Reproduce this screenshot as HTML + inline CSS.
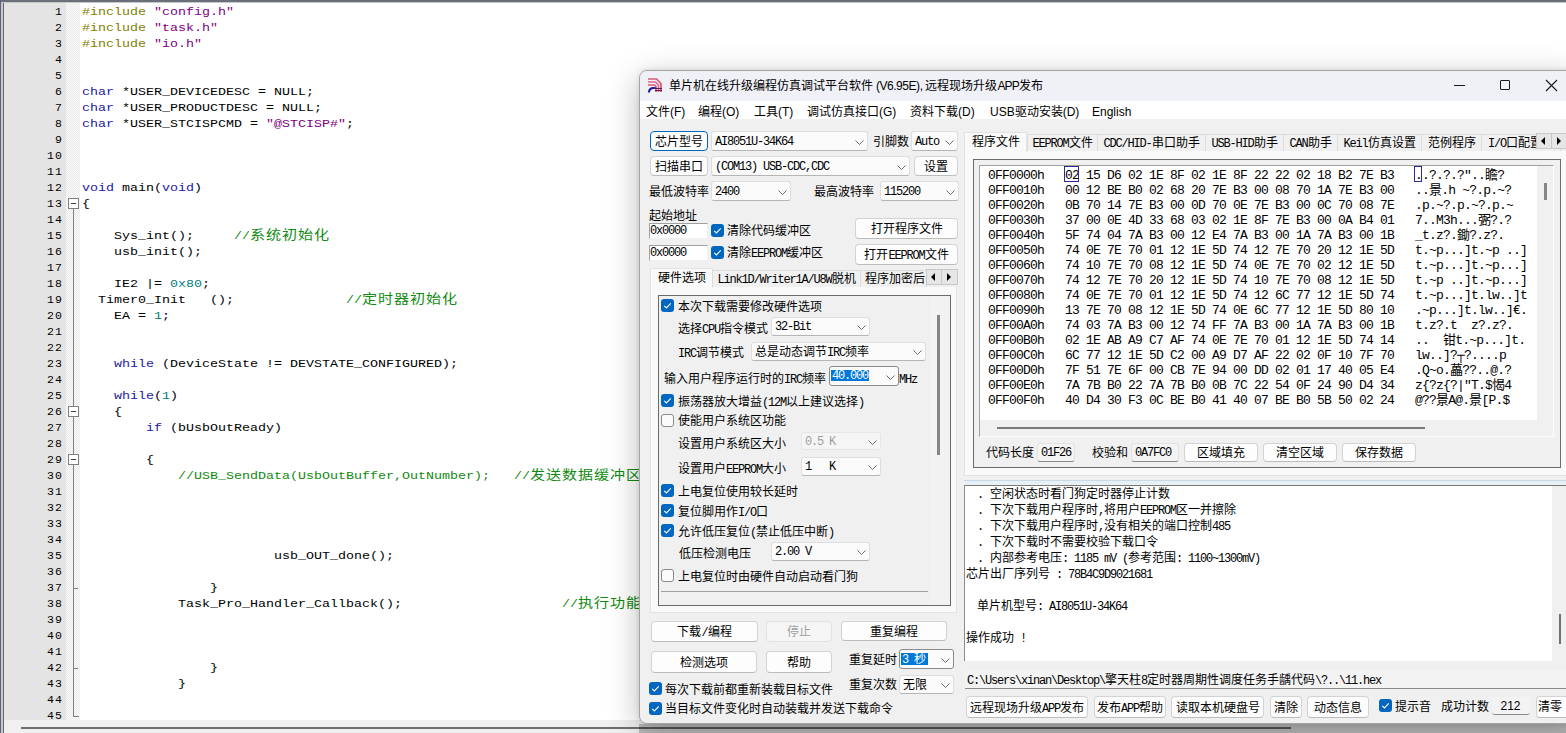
<!DOCTYPE html><html lang="zh-CN"><head><meta charset="utf-8"><style>
*{margin:0;padding:0;box-sizing:border-box}
html,body{width:1566px;height:733px;overflow:hidden;background:#fff}
body{position:relative;font-family:"Liberation Sans",sans-serif;font-size:12px;color:#000}
.a{position:absolute}
#ed{position:absolute;left:0;top:0;width:1566px;height:733px;background:#fff}
.ln{position:absolute;left:4px;width:59px;text-align:right;font-family:"Liberation Mono",monospace;font-size:11.5px;letter-spacing:1.1px;line-height:16px;color:#000;white-space:pre}
.cl{position:absolute;left:82px;font-family:"Liberation Mono",monospace;font-size:11.5px;letter-spacing:0;line-height:16px;color:#000;white-space:pre;transform-origin:0 0;transform:scaleX(1.15942)}
.cj{font-size:13px;letter-spacing:0.8px}
.kw{color:#1a1aa6}.pp{color:#808000}.st{color:#800080}.cm{color:#108a10}.nu{color:#008080}

#win{position:absolute;left:639px;top:70px;width:940px;height:654px;background:#f0f0f0;border:1px solid #a4a4a4;border-radius:8px;overflow:hidden;box-shadow:0 0 5px rgba(0,0,0,0.10),0 8px 32px rgba(0,0,0,0.27)}
.L{position:absolute;white-space:pre;font-size:12px;line-height:16px;height:16px;color:#000}
.ss{font-family:"Liberation Mono",monospace;font-size:12px;letter-spacing:-1.2px}
.btn{position:absolute;background:#fdfdfd;border:1px solid #d3d3d3;border-bottom-color:#bcbcbc;border-radius:4px;text-align:center;white-space:nowrap;font-size:12px;color:#000}
.cmb{position:absolute;background:#fbfbfb;border:1px solid #dedede;border-bottom-color:#b5b5b5;border-radius:3px;white-space:nowrap;font-size:12px;color:#000}
.chv{position:absolute;width:9px;height:5px}.chv svg{display:block}
.chk{position:absolute;width:13px;height:13px;border-radius:3px;background:#0067c0}
.unc{position:absolute;width:13px;height:13px;border-radius:3px;background:#fbfbfb;border:1px solid #8a8a8a}
.edt{position:absolute;background:#fff;border-top:1px solid #a0a0a0;border-left:1px solid #a0a0a0;border-right:1px solid #f0f0f0;border-bottom:1px solid #f0f0f0;white-space:nowrap}
.hex{position:absolute;left:988px;font-family:"Liberation Mono",monospace;font-size:13px;letter-spacing:-0.8px;line-height:15px;height:15px;white-space:pre;color:#000}
.tab{position:absolute;background:#f0f0f0;border:1px solid #d9d9d9;border-bottom:none;white-space:nowrap;font-size:12px;text-align:center;line-height:17px}
</style></head><body><div id="ed"><div class="a" style="left:0;top:0;width:1566px;height:2px;background:#6b6f7a"></div><div class="a" style="left:0;top:2px;width:1566px;height:1px;background:#c8c8c8"></div><div class="a" style="left:0;top:0;width:1px;height:733px;background:#5a6488"></div><div class="a" style="left:1px;top:2px;width:2px;height:731px;background:#c8c8c8"></div><div class="a" style="left:3px;top:3px;width:1px;height:730px;background:#6a6a6a"></div><div class="a" style="left:4px;top:3px;width:62px;height:717px;background:#e4e4e4"></div><div class="a" style="left:66px;top:3px;width:14px;height:717px;background-color:#f8f8f8;background-image:linear-gradient(45deg,#ececec 25%,transparent 25%,transparent 75%,#ececec 75%),linear-gradient(45deg,#ececec 25%,transparent 25%,transparent 75%,#ececec 75%);background-size:2px 2px;background-position:0 0,1px 1px"></div><div class="ln" style="top:4px">1</div><div class="ln" style="top:20px">2</div><div class="ln" style="top:36px">3</div><div class="ln" style="top:52px">4</div><div class="ln" style="top:68px">5</div><div class="ln" style="top:84px">6</div><div class="ln" style="top:100px">7</div><div class="ln" style="top:116px">8</div><div class="ln" style="top:132px">9</div><div class="ln" style="top:148px">10</div><div class="ln" style="top:164px">11</div><div class="ln" style="top:180px">12</div><div class="ln" style="top:196px">13</div><div class="ln" style="top:212px">14</div><div class="ln" style="top:228px">15</div><div class="ln" style="top:244px">16</div><div class="ln" style="top:260px">17</div><div class="ln" style="top:276px">18</div><div class="ln" style="top:292px">19</div><div class="ln" style="top:308px">20</div><div class="ln" style="top:324px">21</div><div class="ln" style="top:340px">22</div><div class="ln" style="top:356px">23</div><div class="ln" style="top:372px">24</div><div class="ln" style="top:388px">25</div><div class="ln" style="top:404px">26</div><div class="ln" style="top:420px">27</div><div class="ln" style="top:436px">28</div><div class="ln" style="top:452px">29</div><div class="ln" style="top:468px">30</div><div class="ln" style="top:484px">31</div><div class="ln" style="top:500px">32</div><div class="ln" style="top:516px">33</div><div class="ln" style="top:532px">34</div><div class="ln" style="top:548px">35</div><div class="ln" style="top:564px">36</div><div class="ln" style="top:580px">37</div><div class="ln" style="top:596px">38</div><div class="ln" style="top:612px">39</div><div class="ln" style="top:628px">40</div><div class="ln" style="top:644px">41</div><div class="ln" style="top:660px">42</div><div class="ln" style="top:676px">43</div><div class="ln" style="top:692px">44</div><div class="ln" style="top:708px">45</div><div class="cl" style="top:4px"><span class="pp">#include</span> <span class="st">"config.h"</span></div><div class="cl" style="top:20px"><span class="pp">#include</span> <span class="st">"task.h"</span></div><div class="cl" style="top:36px"><span class="pp">#include</span> <span class="st">"io.h"</span></div><div class="cl" style="top:84px"><span class="kw">char</span> *USER_DEVICEDESC = NULL;</div><div class="cl" style="top:100px"><span class="kw">char</span> *USER_PRODUCTDESC = NULL;</div><div class="cl" style="top:116px"><span class="kw">char</span> *USER_STCISPCMD = <span class="st">"@STCISP#"</span>;</div><div class="cl" style="top:180px"><span class="kw">void</span> main(<span class="kw">void</span>)</div><div class="cl" style="top:196px">{</div><div class="cl" style="top:228px">    Sys_int();     <span class="cm">//<span class="cj">系统初始化</span></span></div><div class="cl" style="top:244px">    usb_init();</div><div class="cl" style="top:276px">    IE2 |= <span class="nu">0x80</span>;</div><div class="cl" style="top:292px">  Timer0_Init   ();              <span class="cm">//<span class="cj">定时器初始化</span></span></div><div class="cl" style="top:308px">    EA = <span class="nu">1</span>;</div><div class="cl" style="top:356px">    <span class="kw">while</span> (DeviceState != DEVSTATE_CONFIGURED);</div><div class="cl" style="top:388px">    <span class="kw">while</span>(<span class="nu">1</span>)</div><div class="cl" style="top:404px">    {</div><div class="cl" style="top:420px">        <span class="kw">if</span> (bUsbOutReady)</div><div class="cl" style="top:452px">        {</div><div class="cl" style="top:468px">            <span class="cm">//USB_SendData(UsbOutBuffer,OutNumber);   //<span class="cj">发送数据缓冲区</span></span></div><div class="cl" style="top:548px">                        usb_OUT_done();</div><div class="cl" style="top:580px">                }</div><div class="cl" style="top:596px">            Task_Pro_Handler_Callback();                    <span class="cm">//<span class="cj">执行功能</span></span></div><div class="cl" style="top:660px">                }</div><div class="cl" style="top:676px">            }</div><div class="a" style="left:73px;top:209px;width:1px;height:507px;background:#808080"></div><div class="a" style="left:73px;top:716px;width:6px;height:1px;background:#808080"></div><div class="a" style="left:73px;top:588px;width:5px;height:1px;background:#808080"></div><div class="a" style="left:73px;top:668px;width:5px;height:1px;background:#808080"></div><div class="a" style="left:68px;top:198px;width:11px;height:11px;border:1px solid #808080;background:#fff"><div class="a" style="left:2px;top:4px;width:5px;height:1px;background:#404040"></div></div><div class="a" style="left:68px;top:406px;width:11px;height:11px;border:1px solid #808080;background:#fff"><div class="a" style="left:2px;top:4px;width:5px;height:1px;background:#404040"></div></div><div class="a" style="left:68px;top:454px;width:11px;height:11px;border:1px solid #808080;background:#fff"><div class="a" style="left:2px;top:4px;width:5px;height:1px;background:#404040"></div></div><div class="a" style="left:4px;top:720px;width:1562px;height:13px;background:#f0f0f0"></div><div class="a" style="left:21px;top:727px;width:1270px;height:2px;background:#6e6e6e"></div></div><div id="win"><div class="a" style="left:-1px;top:-1px;width:940px;height:31px;background:#f0f1f7"></div><div class="a" style="left:-1px;top:30px;width:940px;height:18px;background:#ffffff"></div><svg class="a" style="left:7px;top:6px" width="16" height="16" viewBox="0 0 16 16"><path d="M1 2 H9.5 L14 6.5 V15" fill="none" stroke="#d8587a" stroke-width="1.7"/><path d="M1 5 H8.5 L11.5 8 V15" fill="none" stroke="#e06a88" stroke-width="1.7"/><path d="M1 8 H7.5 L9 9.5 V15" fill="none" stroke="#d8587a" stroke-width="1.7"/><path d="M2 15.5 Q2 11 6.5 11 H8.5" fill="none" stroke="#1818a8" stroke-width="2"/><path d="M8 11.5 H15 M8 13.5 H15" stroke="#501040" stroke-width="0.9"/></svg><div class="L " style="left:29px;top:6.5px">单片机在线升级编程仿真调试平台软件<span style="letter-spacing:-0.45px"> (V6.95E), </span>远程现场升级<span style="letter-spacing:-0.9px">APP</span>发布</div><div class="a" style="left:814px;top:14px;width:11px;height:1px;background:#1a1a1a"></div><div class="a" style="left:860px;top:9px;width:10px;height:10px;border:1px solid #1a1a1a;border-radius:1px"></div><svg class="a" style="left:905px;top:8px" width="13" height="13" viewBox="0 0 13 13"><path d="M1 1 L12 12 M12 1 L1 12" stroke="#1a1a1a" stroke-width="1.1"/></svg><div class="L " style="left:6px;top:33px">文件(F)</div><div class="L " style="left:58px;top:33px">编程(O)</div><div class="L " style="left:114px;top:33px">工具(T)</div><div class="L " style="left:167px;top:33px">调试仿真接口(G)</div><div class="L " style="left:270px;top:33px">资料下载(D)</div><div class="L " style="left:350px;top:33px">USB驱动安装(D)</div><div class="L " style="left:452px;top:33px">English</div><div class="btn " style="left:10px;top:60px;width:58px;height:20px;line-height:20px;border:1px solid #0067c0;box-shadow:inset 0 0 0 0px #0067c0">芯片型号</div><div class="cmb" style="left:71px;top:60px;width:157px;height:20px"><div class="L ss" style="left:3px;top:2px">AI8051U-34K64</div><div class="chv" style="right:3px;top:8px"><svg width="9" height="5" viewBox="0 0 9 5"><path d="M0.5 0.5 L4.5 4.5 L8.5 0.5" fill="none" stroke="#5a5a5a" stroke-width="0.9"/></svg></div></div><div class="L " style="left:233px;top:63px">引脚数</div><div class="cmb" style="left:271px;top:60px;width:47px;height:20px"><div class="L ss" style="left:3px;top:2px">Auto</div><div class="chv" style="right:3px;top:8px"><svg width="9" height="5" viewBox="0 0 9 5"><path d="M0.5 0.5 L4.5 4.5 L8.5 0.5" fill="none" stroke="#5a5a5a" stroke-width="0.9"/></svg></div></div><div class="btn " style="left:10px;top:85px;width:58px;height:20px;line-height:20px">扫描串口</div><div class="cmb" style="left:71px;top:85px;width:199px;height:20px"><div class="L ss" style="left:3px;top:2px">(COM13) USB-CDC,CDC</div><div class="chv" style="right:3px;top:8px"><svg width="9" height="5" viewBox="0 0 9 5"><path d="M0.5 0.5 L4.5 4.5 L8.5 0.5" fill="none" stroke="#5a5a5a" stroke-width="0.9"/></svg></div></div><div class="btn " style="left:274px;top:85px;width:44px;height:20px;line-height:20px">设置</div><div class="L " style="left:9px;top:113px">最低波特率</div><div class="cmb" style="left:71px;top:110px;width:80px;height:20px"><div class="L ss" style="left:3px;top:2px">2400</div><div class="chv" style="right:3px;top:8px"><svg width="9" height="5" viewBox="0 0 9 5"><path d="M0.5 0.5 L4.5 4.5 L8.5 0.5" fill="none" stroke="#5a5a5a" stroke-width="0.9"/></svg></div></div><div class="L " style="left:174px;top:113px">最高波特率</div><div class="cmb" style="left:240px;top:110px;width:79px;height:20px"><div class="L ss" style="left:3px;top:2px">115200</div><div class="chv" style="right:3px;top:8px"><svg width="9" height="5" viewBox="0 0 9 5"><path d="M0.5 0.5 L4.5 4.5 L8.5 0.5" fill="none" stroke="#5a5a5a" stroke-width="0.9"/></svg></div></div><div class="L " style="left:9px;top:137px">起始地址</div><div class="edt" style="left:9px;top:152px;width:59px;height:16px"><div class="L ss" style="left:0;top:-1px">0x0000</div></div><div class="chk" style="left:71px;top:153px"><svg width="13" height="13" viewBox="0 0 13 13" style="position:absolute;left:0;top:0"><path d="M3.2 6.8 L5.4 9 L9.8 4.4" fill="none" stroke="#fff" stroke-width="1.1"/></svg></div><div class="L " style="left:87px;top:152px">清除代码缓冲区</div><div class="btn " style="left:215px;top:147px;width:103px;height:21px;line-height:21px">打开程序文件</div><div class="edt" style="left:9px;top:174px;width:59px;height:16px"><div class="L ss" style="left:0;top:-1px">0x0000</div></div><div class="chk" style="left:71px;top:175px"><svg width="13" height="13" viewBox="0 0 13 13" style="position:absolute;left:0;top:0"><path d="M3.2 6.8 L5.4 9 L9.8 4.4" fill="none" stroke="#fff" stroke-width="1.1"/></svg></div><div class="L " style="left:87px;top:174px">清除<span class="ss">EEPROM</span>缓冲区</div><div class="btn " style="left:215px;top:173px;width:103px;height:21px;line-height:21px">打开<span class="ss">EEPROM</span>文件</div><div class="a" style="left:10px;top:216px;width:307px;height:326px;background:#f9f9f9;border:1px solid #e3e3e3;border-top:none"></div><div class="tab" style="left:10px;top:197px;width:63px;height:20px;background:#f9f9f9;border-color:#e3e3e3;line-height:18px">硬件选项</div><div class="tab" style="left:72px;top:199px;width:149px;height:17px;border-color:#dcdcdc"><span class="ss">Link1D/Writer1A/U8W</span>脱机</div><div class="tab" style="left:220px;top:199px;width:67px;height:17px;border-color:#dcdcdc;text-align:left;padding-left:4px;overflow:hidden">程序加密后</div><div class="a" style="left:286px;top:198px;width:16px;height:16px;background:#e6e6e6;border:1px solid #c8c8c8"></div><div class="a" style="left:301px;top:198px;width:17px;height:16px;background:#e6e6e6;border:1px solid #c8c8c8"></div><svg class="a" style="left:291px;top:202px" width="5" height="8"><path d="M4 0 L0 4 L4 8Z" fill="#000"/></svg><svg class="a" style="left:307px;top:202px" width="5" height="8"><path d="M0 0 L4 4 L0 8Z" fill="#000"/></svg><div class="a" style="left:18px;top:224px;width:293px;height:311px;background:#f0f0f0;border:1px solid #6a6a6a"></div><div class="a" style="left:290px;top:225px;width:20px;height:309px;background:#f2f2f2"></div><div class="a" style="left:297px;top:244px;width:3px;height:140px;background:#858585"></div><div class="a" style="left:21px;top:520px;width:267px;height:1px;background:#a0a0a0"></div><div class="chk" style="left:21px;top:228px"><svg width="13" height="13" viewBox="0 0 13 13" style="position:absolute;left:0;top:0"><path d="M3.2 6.8 L5.4 9 L9.8 4.4" fill="none" stroke="#fff" stroke-width="1.1"/></svg></div><div class="L " style="left:38px;top:227.5px">本次下载需要修改硬件选项</div><div class="L " style="left:38px;top:249.5px">选择<span class="ss">CPU</span>指令模式</div><div class="cmb" style="left:131px;top:246px;width:99px;height:19px"><div class="L ss" style="left:3px;top:1px">32-Bit</div><div class="chv" style="right:3px;top:7px"><svg width="9" height="5" viewBox="0 0 9 5"><path d="M0.5 0.5 L4.5 4.5 L8.5 0.5" fill="none" stroke="#5a5a5a" stroke-width="0.9"/></svg></div></div><div class="L " style="left:38px;top:274px"><span class="ss">IRC</span>调节模式</div><div class="cmb" style="left:111px;top:271px;width:175px;height:19px"><div class="L " style="left:3px;top:1px">总是动态调节<span class="ss">IRC</span>频率</div><div class="chv" style="right:3px;top:7px"><svg width="9" height="5" viewBox="0 0 9 5"><path d="M0.5 0.5 L4.5 4.5 L8.5 0.5" fill="none" stroke="#5a5a5a" stroke-width="0.9"/></svg></div></div><div class="L " style="left:24px;top:300px">输入用户程序运行时的<span class="ss">IRC</span>频率</div><div class="cmb" style="left:189px;top:295px;width:70px;height:20px;border-color:#8a8a8a"><div class="a" style="left:1px;top:3px;width:38px;height:11px;background:#0078d7"></div><div class="L ss" style="left:2px;top:1px;color:#fff">40.000</div><div class="chv" style="right:3px;top:8px"><svg width="9" height="5" viewBox="0 0 9 5"><path d="M0.5 0.5 L4.5 4.5 L8.5 0.5" fill="none" stroke="#5a5a5a" stroke-width="0.9"/></svg></div></div><div class="L " style="left:259px;top:300px"><span class="ss">MHz</span></div><div class="chk" style="left:21px;top:323px"><svg width="13" height="13" viewBox="0 0 13 13" style="position:absolute;left:0;top:0"><path d="M3.2 6.8 L5.4 9 L9.8 4.4" fill="none" stroke="#fff" stroke-width="1.1"/></svg></div><div class="L " style="left:38px;top:322.5px">振荡器放大增益<span class="ss">(12M</span>以上建议选择<span class="ss">)</span></div><div class="unc" style="left:21px;top:343px"></div><div class="L " style="left:38px;top:342px">使能用户系统区功能</div><div class="L " style="left:38px;top:365px">设置用户系统区大小</div><div class="cmb" style="left:161px;top:361px;width:80px;height:18px;background:#f5f5f5;border-color:#e6e6e6"><div class="L ss" style="left:3px;top:1px;color:#a0a0a0">0.5 K</div><div class="chv" style="right:3px;top:7px"><svg width="9" height="5" viewBox="0 0 9 5"><path d="M0.5 0.5 L4.5 4.5 L8.5 0.5" fill="none" stroke="#5a5a5a" stroke-width="0.9"/></svg></div></div><div class="L " style="left:38px;top:389.5px">设置用户<span class="ss">EEPROM</span>大小</div><div class="cmb" style="left:161px;top:386px;width:80px;height:19px"><div class="L ss" style="left:3px;top:1px">1   K</div><div class="chv" style="right:3px;top:7px"><svg width="9" height="5" viewBox="0 0 9 5"><path d="M0.5 0.5 L4.5 4.5 L8.5 0.5" fill="none" stroke="#5a5a5a" stroke-width="0.9"/></svg></div></div><div class="chk" style="left:21px;top:413px"><svg width="13" height="13" viewBox="0 0 13 13" style="position:absolute;left:0;top:0"><path d="M3.2 6.8 L5.4 9 L9.8 4.4" fill="none" stroke="#fff" stroke-width="1.1"/></svg></div><div class="L " style="left:38px;top:412.5px">上电复位使用较长延时</div><div class="chk" style="left:21px;top:433px"><svg width="13" height="13" viewBox="0 0 13 13" style="position:absolute;left:0;top:0"><path d="M3.2 6.8 L5.4 9 L9.8 4.4" fill="none" stroke="#fff" stroke-width="1.1"/></svg></div><div class="L " style="left:38px;top:432.5px">复位脚用作<span class="ss">I/O</span>口</div><div class="chk" style="left:21px;top:453px"><svg width="13" height="13" viewBox="0 0 13 13" style="position:absolute;left:0;top:0"><path d="M3.2 6.8 L5.4 9 L9.8 4.4" fill="none" stroke="#fff" stroke-width="1.1"/></svg></div><div class="L " style="left:38px;top:452.5px">允许低压复位<span class="ss">(</span>禁止低压中断<span class="ss">)</span></div><div class="L " style="left:39px;top:474.5px">低压检测电压</div><div class="cmb" style="left:131px;top:471px;width:99px;height:19px"><div class="L ss" style="left:3px;top:1px">2.00 V</div><div class="chv" style="right:3px;top:7px"><svg width="9" height="5" viewBox="0 0 9 5"><path d="M0.5 0.5 L4.5 4.5 L8.5 0.5" fill="none" stroke="#5a5a5a" stroke-width="0.9"/></svg></div></div><div class="unc" style="left:21px;top:498px"></div><div class="L " style="left:38px;top:497.5px">上电复位时由硬件自动启动看门狗</div><div class="btn " style="left:11px;top:550px;width:107px;height:21px;line-height:21px">下载<span class="ss">/</span>编程</div><div class="btn " style="left:126px;top:550px;width:66px;height:21px;line-height:21px;color:#a0a0a0;background:#f5f5f5;border-color:#e2e2e2">停止</div><div class="btn " style="left:201px;top:550px;width:106px;height:20px;line-height:20px">重复编程</div><div class="btn " style="left:11px;top:580px;width:106px;height:22px;line-height:22px">检测选项</div><div class="btn " style="left:126px;top:580px;width:66px;height:22px;line-height:22px">帮助</div><div class="L " style="left:209px;top:581px">重复延时</div><div class="cmb" style="left:259px;top:578px;width:55px;height:20px;border-color:#8a8a8a"><div class="a" style="left:1px;top:3px;width:27px;height:12px;background:#0078d7"></div><div class="L" style="left:2px;top:1px;color:#fff"><span class="ss">3 </span>秒</div><div class="chv" style="right:3px;top:8px"><svg width="9" height="5" viewBox="0 0 9 5"><path d="M0.5 0.5 L4.5 4.5 L8.5 0.5" fill="none" stroke="#5a5a5a" stroke-width="0.9"/></svg></div></div><div class="L " style="left:209px;top:606px">重复次数</div><div class="cmb" style="left:259px;top:604px;width:55px;height:19px"><div class="L " style="left:3px;top:1px">无限</div><div class="chv" style="right:3px;top:7px"><svg width="9" height="5" viewBox="0 0 9 5"><path d="M0.5 0.5 L4.5 4.5 L8.5 0.5" fill="none" stroke="#5a5a5a" stroke-width="0.9"/></svg></div></div><div class="chk" style="left:9px;top:611px"><svg width="13" height="13" viewBox="0 0 13 13" style="position:absolute;left:0;top:0"><path d="M3.2 6.8 L5.4 9 L9.8 4.4" fill="none" stroke="#fff" stroke-width="1.1"/></svg></div><div class="L " style="left:25px;top:611px">每次下载前都重新装载目标文件</div><div class="chk" style="left:9px;top:631px"><svg width="13" height="13" viewBox="0 0 13 13" style="position:absolute;left:0;top:0"><path d="M3.2 6.8 L5.4 9 L9.8 4.4" fill="none" stroke="#fff" stroke-width="1.1"/></svg></div><div class="L " style="left:25px;top:630px">当目标文件变化时自动装载并发送下载命令</div><div class="a" style="left:324px;top:80px;width:620px;height:325px;background:#f9f9f9;border-left:1px solid #e3e3e3;border-bottom:1px solid #e3e3e3"></div><div class="tab" style="left:324px;top:61px;width:63px;height:20px;background:#f9f9f9;border-color:#e3e3e3;line-height:19px">程序文件</div><div class="tab" style="left:387px;top:63px;width:71px;height:17px;border-color:#dcdcdc;overflow:hidden"><span class="ss">EEPROM</span>文件</div><div class="tab" style="left:457px;top:63px;width:109px;height:17px;border-color:#dcdcdc;overflow:hidden"><span class="ss">CDC/HID-</span>串口助手</div><div class="tab" style="left:565px;top:63px;width:79px;height:17px;border-color:#dcdcdc;overflow:hidden"><span class="ss">USB-HID</span>助手</div><div class="tab" style="left:643px;top:63px;width:55px;height:17px;border-color:#dcdcdc;overflow:hidden"><span class="ss">CAN</span>助手</div><div class="tab" style="left:697px;top:63px;width:85px;height:17px;border-color:#dcdcdc;overflow:hidden"><span class="ss">Keil</span>仿真设置</div><div class="tab" style="left:781px;top:63px;width:61px;height:17px;border-color:#dcdcdc;overflow:hidden">范例程序</div><div class="tab" style="left:841px;top:63px;width:80px;height:17px;border-color:#dcdcdc;overflow:hidden;text-align:left;padding-left:6px"><span class="ss">I/O</span>口配置</div><div class="a" style="left:896px;top:62px;width:16px;height:16px;background:#e6e6e6;border:1px solid #c8c8c8"></div><div class="a" style="left:911px;top:62px;width:17px;height:16px;background:#e6e6e6;border:1px solid #c8c8c8"></div><svg class="a" style="left:901px;top:66px" width="5" height="8"><path d="M4 0 L0 4 L4 8Z" fill="#000"/></svg><svg class="a" style="left:917px;top:66px" width="5" height="8"><path d="M0 0 L4 4 L0 8Z" fill="#000"/></svg><div class="a" style="left:333px;top:88px;width:588px;height:309px;background:#f0f0f0;border:1px solid #6a6a6a"></div><div class="a" style="left:339px;top:94px;width:575px;height:272px;background:#f0f0f0;border-top:1px solid #a0a0a0;border-left:1px solid #a0a0a0;border-right:1px solid #fdfdfd;border-bottom:1px solid #fdfdfd"></div><div class="a" style="left:340px;top:95px;width:557px;height:254px;background:#ffffff"></div><div class="a" style="left:904px;top:112px;width:3px;height:17px;background:#858585"></div><div class="a" style="left:357px;top:356px;width:428px;height:2px;background:#7a7a7a"></div><div class="hex" style="left:348px;top:97px">0FF0000h   02 15 D6 02 1E 8F 02 1E 8F 22 22 02 18 B2 7E B3   ..?.?.?&quot;..瞻?</div><div class="hex" style="left:348px;top:112px">0FF0010h   00 12 BE B0 02 68 20 7E B3 00 08 70 1A 7E B3 00   ..景.h ~?.p.~?</div><div class="hex" style="left:348px;top:127px">0FF0020h   0B 70 14 7E B3 00 0D 70 0E 7E B3 00 0C 70 08 7E   .p.~?.p.~?.p.~</div><div class="hex" style="left:348px;top:142px">0FF0030h   37 00 0E 4D 33 68 03 02 1E 8F 7E B3 00 0A B4 01   7..M3h...弻?.?</div><div class="hex" style="left:348px;top:157px">0FF0040h   5F 74 04 7A B3 00 12 E4 7A B3 00 1A 7A B3 00 1B   _t.z?.鋤?.z?.</div><div class="hex" style="left:348px;top:172px">0FF0050h   74 0E 7E 70 01 12 1E 5D 74 12 7E 70 20 12 1E 5D   t.~p...]t.~p ..]</div><div class="hex" style="left:348px;top:187px">0FF0060h   74 10 7E 70 08 12 1E 5D 74 0E 7E 70 02 12 1E 5D   t.~p...]t.~p...]</div><div class="hex" style="left:348px;top:202px">0FF0070h   74 12 7E 70 20 12 1E 5D 74 10 7E 70 08 12 1E 5D   t.~p ..]t.~p...]</div><div class="hex" style="left:348px;top:217px">0FF0080h   74 0E 7E 70 01 12 1E 5D 74 12 6C 77 12 1E 5D 74   t.~p...]t.lw..]t</div><div class="hex" style="left:348px;top:232px">0FF0090h   13 7E 70 08 12 1E 5D 74 0E 6C 77 12 1E 5D 80 10   .~p...]t.lw..]€.</div><div class="hex" style="left:348px;top:247px">0FF00A0h   74 03 7A B3 00 12 74 FF 7A B3 00 1A 7A B3 00 1B   t.z?.t  z?.z?.</div><div class="hex" style="left:348px;top:262px">0FF00B0h   02 1E AB A9 C7 AF 74 0E 7E 70 01 12 1E 5D 74 14   ..  钳t.~p...]t.</div><div class="hex" style="left:348px;top:277px">0FF00C0h   6C 77 12 1E 5D C2 00 A9 D7 AF 22 02 0F 10 7F 70   lw..]?┬?....p</div><div class="hex" style="left:348px;top:292px">0FF00D0h   7F 51 7E 6F 00 CB 7E 94 00 DD 02 01 17 40 05 E4   .Q~o.藟??..@.?</div><div class="hex" style="left:348px;top:307px">0FF00E0h   7A 7B B0 22 7A 7B B0 0B 7C 22 54 0F 24 90 D4 34   z{?z{?|&quot;T.$愒4</div><div class="hex" style="left:348px;top:322px">0FF00F0h   40 D4 30 F3 0C BE B0 41 40 07 BE B0 5B 50 02 24   @??景A@.景[P.$</div><div class="a" style="left:424px;top:95px;width:15px;height:16px;border:1px solid #2a2a9a"></div><div class="a" style="left:774px;top:95px;width:8px;height:16px;border:1px solid #2a2a9a"></div><div class="L " style="left:346px;top:374px">代码长度</div><div class="a" style="left:397px;top:372px;width:38px;height:19px;background:#f3f3f3;border:1px solid #e2e2e2;border-bottom-color:#8a8a8a;border-radius:3px"><div class="L ss" style="left:3px;top:1px">01F26</div></div><div class="L " style="left:452px;top:374px">校验和</div><div class="a" style="left:491px;top:372px;width:48px;height:19px;background:#f3f3f3;border:1px solid #e2e2e2;border-bottom-color:#8a8a8a;border-radius:3px"><div class="L ss" style="left:3px;top:1px">0A7FC0</div></div><div class="btn " style="left:544px;top:372px;width:74px;height:19px;line-height:19px">区域填充</div><div class="btn " style="left:623px;top:372px;width:74px;height:19px;line-height:19px">清空区域</div><div class="btn " style="left:702px;top:372px;width:74px;height:19px;line-height:19px">保存数据</div><div class="a" style="left:324px;top:409px;width:620px;height:1px;background:#c9dae6"></div><div class="a" style="left:324px;top:410px;width:620px;height:3px;background:#e6f0f7"></div><div class="a" style="left:324px;top:414px;width:620px;height:176px;background:#fff;border-top:1px solid #787878;border-left:1px solid #8a8a8a"></div><div class="a" style="left:912px;top:415px;width:20px;height:175px;background:#f0f0f0"></div><div class="a" style="left:919px;top:543px;width:2px;height:30px;background:#707070"></div><div class="L " style="left:337px;top:415px"><span class="ss">.</span></div><div class="L " style="left:350px;top:415px">空闲状态时看门狗定时器停止计数</div><div class="L " style="left:337px;top:431px"><span class="ss">.</span></div><div class="L " style="left:350px;top:431px">下次下载用户程序时<span class="ss">,</span>将用户<span class="ss">EEPROM</span>区一并擦除</div><div class="L " style="left:337px;top:447px"><span class="ss">.</span></div><div class="L " style="left:350px;top:447px">下次下载用户程序时<span class="ss">,</span>没有相关的端口控制<span class="ss">485</span></div><div class="L " style="left:337px;top:463px"><span class="ss">.</span></div><div class="L " style="left:350px;top:463px">下次下载时不需要校验下载口令</div><div class="L " style="left:337px;top:479px"><span class="ss">.</span></div><div class="L " style="left:350px;top:479px">内部参考电压<span class="ss">: 1185 mV (</span>参考范围<span class="ss">: 1100~1300mV)</span></div><div class="L " style="left:326px;top:495px">芯片出厂序列号<span class="ss"> : 78B4C9D9021681</span></div><div class="L " style="left:337px;top:527px">单片机型号<span class="ss">: AI8051U-34K64</span></div><div class="L " style="left:326px;top:559px">操作成功<span class="ss"> !</span></div><div class="a" style="left:325px;top:599px;width:620px;height:19px;background:#f3f3f3;border-bottom:1px solid #8a8a8a"></div><div class="L " style="left:327px;top:601px"><span class="ss">C:\Users\xinan\Desktop\</span>擎天柱<span class="ss">8</span>定时器周期性调度任务手龋代码<span class="ss">\?..\11.hex</span></div><div class="btn " style="left:326px;top:625px;width:122px;height:22px;line-height:22px">远程现场升级<span class="ss">APP</span>发布</div><div class="btn " style="left:454px;top:625px;width:72px;height:22px;line-height:22px">发布<span class="ss">APP</span>帮助</div><div class="btn " style="left:531px;top:625px;width:93px;height:22px;line-height:22px">读取本机硬盘号</div><div class="btn " style="left:630px;top:625px;width:32px;height:22px;line-height:22px">清除</div><div class="btn " style="left:667px;top:625px;width:62px;height:22px;line-height:22px">动态信息</div><div class="chk" style="left:739px;top:628px"><svg width="13" height="13" viewBox="0 0 13 13" style="position:absolute;left:0;top:0"><path d="M3.2 6.8 L5.4 9 L9.8 4.4" fill="none" stroke="#fff" stroke-width="1.1"/></svg></div><div class="L " style="left:755px;top:627.5px">提示音</div><div class="L " style="left:801px;top:627.5px">成功计数</div><div class="a" style="left:852px;top:626px;width:38px;height:18px;background:#f3f3f3;border-bottom:1px solid #8a8a8a;border-radius:3px;text-align:center"><div class="L" style="left:0;width:37px;top:1px;text-align:center">212</div></div><div class="btn" style="left:896px;top:625px;width:40px;height:22px;line-height:21px;text-align:left;padding-left:1px">清零</div></div><div class="a" style="left:639px;top:724px;width:927px;height:9px;background:rgba(0,0,0,0.22)"></div></body></html>
